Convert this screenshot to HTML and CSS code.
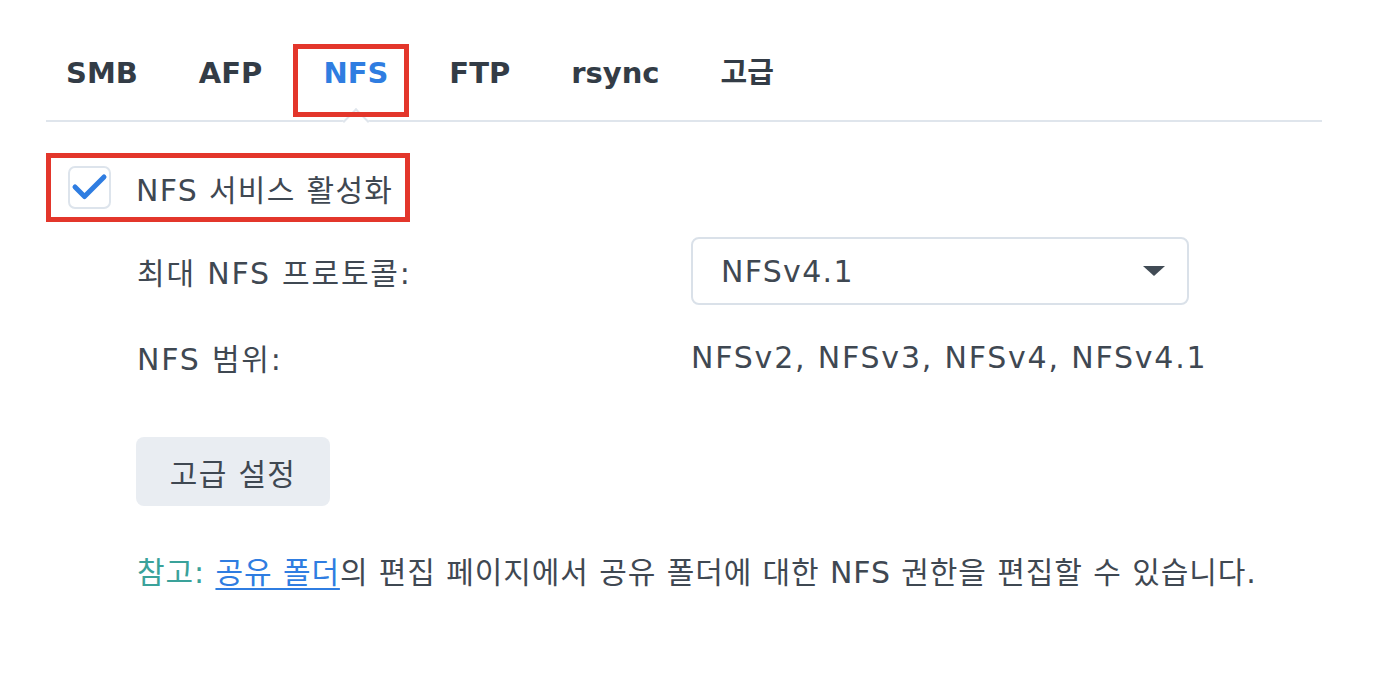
FILE: index.html
```html
<!DOCTYPE html>
<html lang="ko">
<head>
<meta charset="utf-8">
<title>NFS</title>
<link rel="stylesheet" href="styles.css">
</head>
<body>
<div class="page">
  <nav class="tabs">
    <span class="tab">SMB</span>
    <span class="tab">AFP</span>
    <span class="tab active">NFS</span>
    <span class="tab">FTP</span>
    <span class="tab">rsync</span>
    <span class="tab">고급</span>
  </nav>

  <label class="enable">
    <span class="checkbox">
      <svg width="43" height="43" viewBox="0 0 43 43"><polyline points="7,21 16.5,30.5 36,11" fill="none" stroke="#2f7de1" stroke-width="5" stroke-linecap="round" stroke-linejoin="round"/></svg>
    </span>
    <span class="enable-text">NFS 서비스 활성화</span>
  </label>

  <div class="form">
    <div class="label">최대 NFS 프로토콜:</div>
    <div class="select">
      <span>NFSv4.1</span>
      <span class="caret"></span>
    </div>
    <div class="label">NFS 범위:</div>
    <div class="value">NFSv2, NFSv3, NFSv4, NFSv4.1</div>
  </div>

  <button class="btn">고급 설정</button>

  <p class="note"><span class="note-tag">참고:</span> <a class="link">공유 폴더</a>의 편집 페이지에서 공유 폴더에 대한 NFS 권한을 편집할 수 있습니다.</p>
</div>
</body>
</html>
```

FILE: styles.css
```css
* { box-sizing: border-box; }

html, body {
  margin: 0;
  background: #ffffff;
}

body {
  font-family: "DejaVu Sans", "Noto Sans CJK KR", sans-serif;
  color: #3f4852;
  font-size: 30px;
  letter-spacing: 1.3px;
}

.page {
  width: 1386px;
  height: 692px;
  padding: 44px 64px 0 46px;
}

.tabs {
  display: flex;
  gap: 61px;
  padding-left: 20px;
  border-bottom: 2px solid #dfe5ec;
}

.tab {
  position: relative;
  font-weight: bold;
  font-size: 29px;
  letter-spacing: 0;
  line-height: 58px;
  padding-bottom: 18px;
  color: #333c46;
}

.tab.active {
  color: #2f7de1;
}

.tab.active::before {
  content: "";
  position: absolute;
  left: -30px;
  right: -21px;
  top: 0;
  bottom: 3px;
  border: 5px solid #e3362b;
  z-index: 2;
}

.tab.active::after {
  content: "";
  position: absolute;
  left: 50%;
  top: 68px;
  width: 17px;
  height: 17px;
  background: #ffffff;
  border-top: 2px solid #dfe5ec;
  border-left: 2px solid #dfe5ec;
  transform: translateX(-50%) rotate(45deg);
  z-index: 1;
}

.enable {
  display: flex;
  align-items: center;
  width: 364px;
  height: 69px;
  margin-top: 31px;
  padding-left: 22px;
  outline: 5px solid #e3362b;
  outline-offset: -5px;
}

.checkbox {
  width: 43px;
  height: 43px;
  border: 2px solid #dde4ec;
  border-radius: 7px;
  display: flex;
  align-items: center;
  justify-content: center;
  flex: none;
}

.checkbox svg {
  display: block;
  flex: none;
}

.enable-text {
  margin-left: 25px;
  white-space: nowrap;
}

.form {
  display: grid;
  grid-template-columns: 554px 498px;
  grid-auto-rows: 68px;
  row-gap: 18px;
  align-items: center;
  margin-top: 15px;
  margin-left: 91px;
}

.label {
  white-space: nowrap;
  letter-spacing: 1.8px;
}

.select {
  height: 68px;
  border: 2px solid #dae1e9;
  border-radius: 8px;
  display: flex;
  align-items: center;
  justify-content: space-between;
  padding: 0 22px 0 28px;
}

.caret {
  width: 0;
  height: 0;
  border-left: 11px solid transparent;
  border-right: 11px solid transparent;
  border-top: 10px solid #414b55;
}

.value {
  white-space: nowrap;
  letter-spacing: 1.8px;
}

.btn {
  display: block;
  margin: 46px 0 0 90px;
  width: 194px;
  height: 69px;
  border: none;
  border-radius: 8px;
  background: #e9edf2;
  font-family: inherit;
  font-size: 30px;
  letter-spacing: 1.3px;
  color: #3f4852;
  padding: 0;
}

.note {
  margin: 47px 0 0 91px;
  line-height: 40px;
  white-space: nowrap;
  letter-spacing: 0.9px;
}

.note-tag {
  color: #3aa29a;
}

.link {
  color: #2f7de1;
  text-decoration: underline;
  text-underline-offset: 5px;
  text-decoration-thickness: 2px;
}
```
